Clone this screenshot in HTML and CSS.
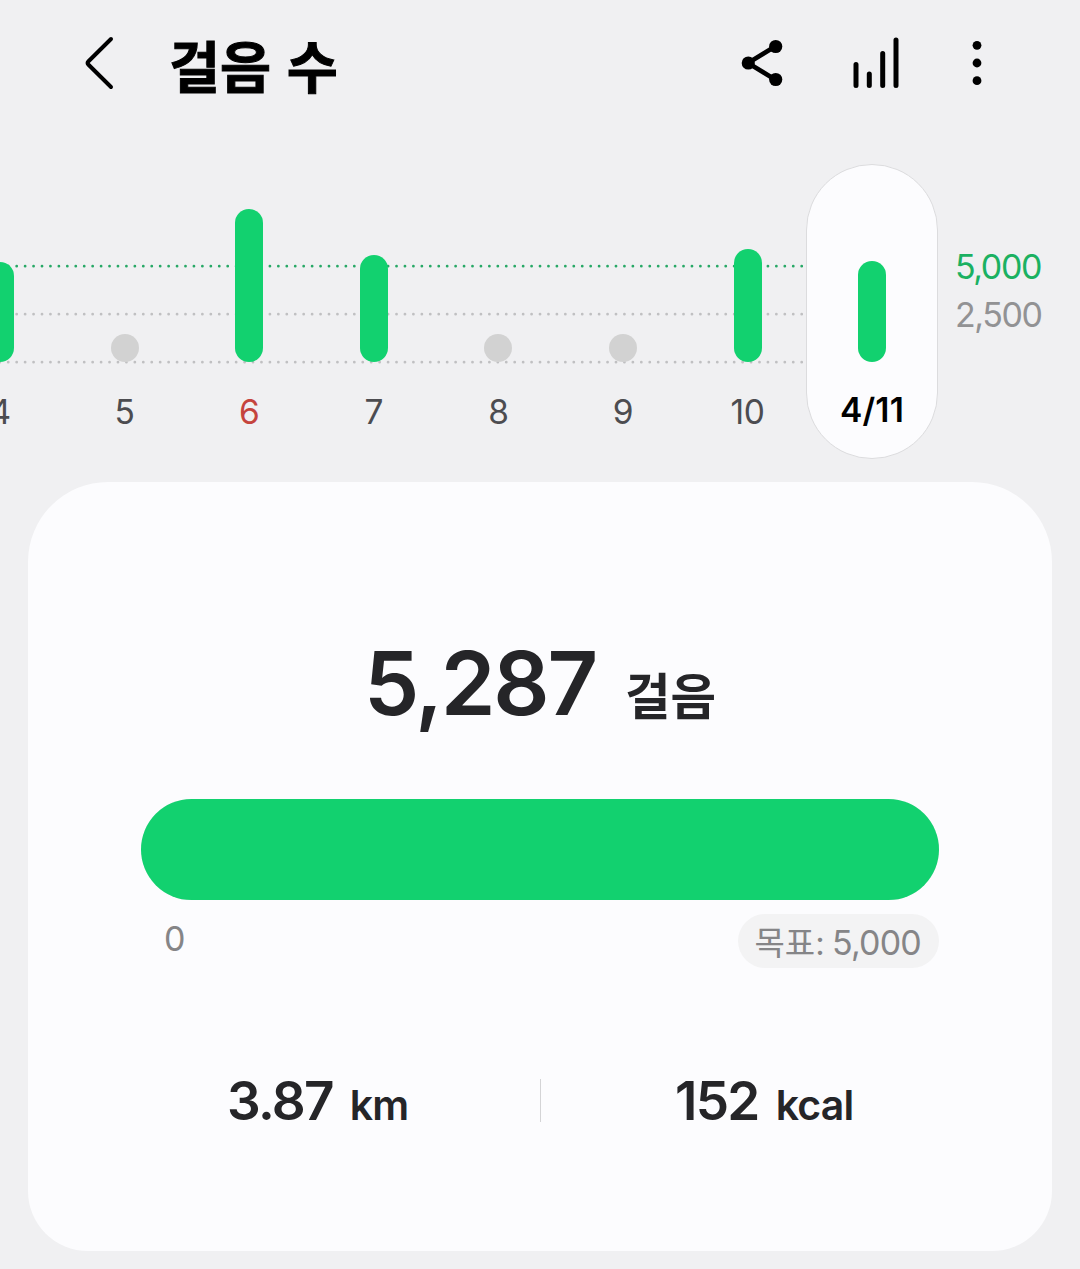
FILE: index.html
```html
<!DOCTYPE html>
<html lang="ko">
<head>
  <meta charset="UTF-8" />
  <meta name="viewport" content="width=device-width, initial-scale=1.0"/>
  <title>걸음 수</title>
  <link rel="stylesheet" href="styles.css">
</head>
<body>

<header class="topbar">
  <svg class="back" width="32" height="56" viewBox="0 0 32 56">
    <path d="M27 4 L4.3 26.5 Q2.8 28 4.3 29.5 L27 52" />
  </svg>
  <h1>걸음 수</h1>
  <div class="actions">
    <svg class="share" width="44" height="50" viewBox="0 0 44 50">
      <path d="M35 8.5 L8 25 L35 41.5" />
      <circle cx="8.3" cy="25" r="6.6" />
      <circle cx="35.7" cy="8.5" r="6.6" />
      <circle cx="35.7" cy="41.5" r="6.6" />
    </svg>
    <svg class="stats" width="48" height="52" viewBox="0 0 48 52">
      <path d="M3 27.5V48.5M16.3 37V48.5M29.7 16.5V48.5M43 3V48.5" />
    </svg>
    <svg class="more" width="12" height="48" viewBox="0 0 12 48">
      <circle cx="6" cy="6.3" r="4.4" />
      <circle cx="6" cy="24" r="4.4" />
      <circle cx="6" cy="41.7" r="4.4" />
    </svg>
  </div>
</header>

<section class="chart">
  <svg class="grid" width="806" height="110" viewBox="0 0 806 110">
    <path class="goal-line" d="M-0.2 6.2H803" />
    <path d="M-0.2 54.2H803" />
    <path d="M-0.2 102.2H803" />
  </svg>
  <div class="days">
    <div class="day"><div class="bar" style="height: 100px"></div><span>4</span></div>
    <div class="day"><div class="bar low" style="height: 28px"></div><span>5</span></div>
    <div class="day sunday"><div class="bar" style="height: 153px"></div><span>6</span></div>
    <div class="day"><div class="bar" style="height: 107px"></div><span>7</span></div>
    <div class="day"><div class="bar low" style="height: 28px"></div><span>8</span></div>
    <div class="day"><div class="bar low" style="height: 28px"></div><span>9</span></div>
    <div class="day"><div class="bar" style="height: 113px"></div><span>10</span></div>
    <div class="day selected"><div class="bar" style="height: 101px"></div><span>4/11</span></div>
  </div>
  <div class="axis">
    <span class="goal">5,000</span>
    <span>2,500</span>
  </div>
</section>

<main class="card">
  <div class="steps"><strong>5,287</strong><span>걸음</span></div>
  <div class="progress"><div class="fill" style="width: 100%"></div></div>
  <div class="range">
    <span class="zero">0</span>
    <span class="target">목표: <b>5,000</b></span>
  </div>
  <div class="totals">
    <div class="total"><strong>3.87</strong><span>km</span></div>
    <div class="total kcal"><strong>152</strong><span>kcal</span></div>
  </div>
</main>

</body>
</html>
```
FILE: styles.css
```css
* {
  box-sizing: border-box;
}
body {
  margin: 0;
  height: 1269px;
  overflow: hidden;
  background: #f0f0f2;
  color: #252528;
  font-family: Inter, "Noto Sans CJK KR", sans-serif;
}
svg {
  display: block;
}
.topbar {
  display: flex;
  align-items: center;
  height: 126px;
  padding: 0 97px 0 84px;
}
.back {
  fill: none;
  stroke: #000;
  stroke-width: 4;
  stroke-linecap: round;
}
h1 {
  margin: 1px 0 0 53px;
  font-family: "Noto Sans CJK KR", sans-serif;
  font-size: 55.5px;
  line-height: 80px;
  font-weight: 700;
  color: #000;
  -webkit-text-stroke: 1px #000;
}
.actions {
  display: flex;
  align-items: center;
  margin-left: auto;
}
.share path {
  fill: none;
  stroke: #000;
  stroke-width: 4.6;
}
.stats {
  margin: 0 70px 0 69px;
  fill: none;
  stroke: #000;
  stroke-width: 5;
  stroke-linecap: round;
}
.chart {
  position: relative;
  display: flex;
  height: 356px;
  padding-top: 38px;
}
/* dotted guides run behind the bars */
.grid {
  position: absolute;
  left: 0;
  top: 134px;
  fill: none;
  stroke: #c0c0c2;
  stroke-width: 2.8;
  stroke-linecap: round;
  stroke-dasharray: 0 8.441;
}
.grid .goal-line {
  stroke: #27a866;
}
.days {
  position: relative;
  display: flex;
  flex: none;
  height: 295px;
  margin-left: -62.3px;
}
.day {
  display: flex;
  flex-direction: column;
  align-items: center;
  justify-content: flex-end;
  width: 124.6px;
  padding-bottom: 27px;
}
.bar {
  width: 28px;
  border-radius: 14px;
  background: #12d16f;
}
.bar.low {
  background: #d2d2d2;
}
.day span {
  margin-top: 30px;
  font-size: 33.5px;
  line-height: 40px;
  letter-spacing: -0.4px;
  color: #4c4c50;
}
.sunday span {
  color: #c5443e;
}
.selected {
  width: 132px;
  margin-left: -3.9px;
  padding-bottom: 28px;
  border: 1px solid #dcdcde;
  border-radius: 66px;
  background: #fcfcfe;
}
.selected .bar {
  margin-bottom: -2px;
}
.selected span {
  font-weight: 600;
  letter-spacing: 0.2px;
  color: #000;
}
.axis {
  display: flex;
  flex-direction: column;
  margin: 79px 0 0 17px;
  font-size: 34px;
  line-height: 48px;
  letter-spacing: -1.4px;
  color: #929294;
}
.axis .goal {
  color: #1bb162;
}
.card {
  height: 769px;
  margin: 0 28px;
  padding: 152px 113px 0;
  border-radius: 80px 80px 60px 60px;
  background: #fcfcfe;
}
.steps {
  display: flex;
  align-items: baseline;
  justify-content: center;
  height: 165px;
}
.steps strong {
  font-size: 88px;
  line-height: 98px;
  font-weight: 600;
  letter-spacing: -2.2px;
}
.steps span {
  margin-left: 29px;
  font-size: 49.5px;
  font-weight: 700;
}
.progress {
  height: 101px;
  border-radius: 51px;
  background: #e8e8ea;
}
.fill {
  height: 100%;
  border-radius: 51px;
  background: #12d16f;
}
.range {
  display: flex;
  justify-content: space-between;
  height: 179px;
  padding-top: 14px;
  color: #858587;
}
.zero {
  padding-left: 23px;
  font-size: 34px;
  line-height: 49px;
}
.target {
  height: 54px;
  padding: 0 18px 0 16px;
  border-radius: 27px;
  background: #f3f3f4;
  font-size: 33px;
  line-height: 57px;
  word-spacing: -2px;
}
.target b {
  font-size: 34px;
  font-weight: 400;
  letter-spacing: -0.8px;
}
.totals {
  display: flex;
  height: 43px;
}
.total {
  display: flex;
  align-items: baseline;
  width: 50%;
  padding-left: 86px;
  line-height: 45px;
}
.total strong {
  font-size: 53px;
  font-weight: 600;
  letter-spacing: -1.7px;
}
.total span {
  margin-left: 17px;
  font-size: 41px;
  font-weight: 600;
  letter-spacing: -0.8px;
}
.kcal {
  padding-left: 134px;
  border-left: 1px solid #d4d4d6;
}
```
